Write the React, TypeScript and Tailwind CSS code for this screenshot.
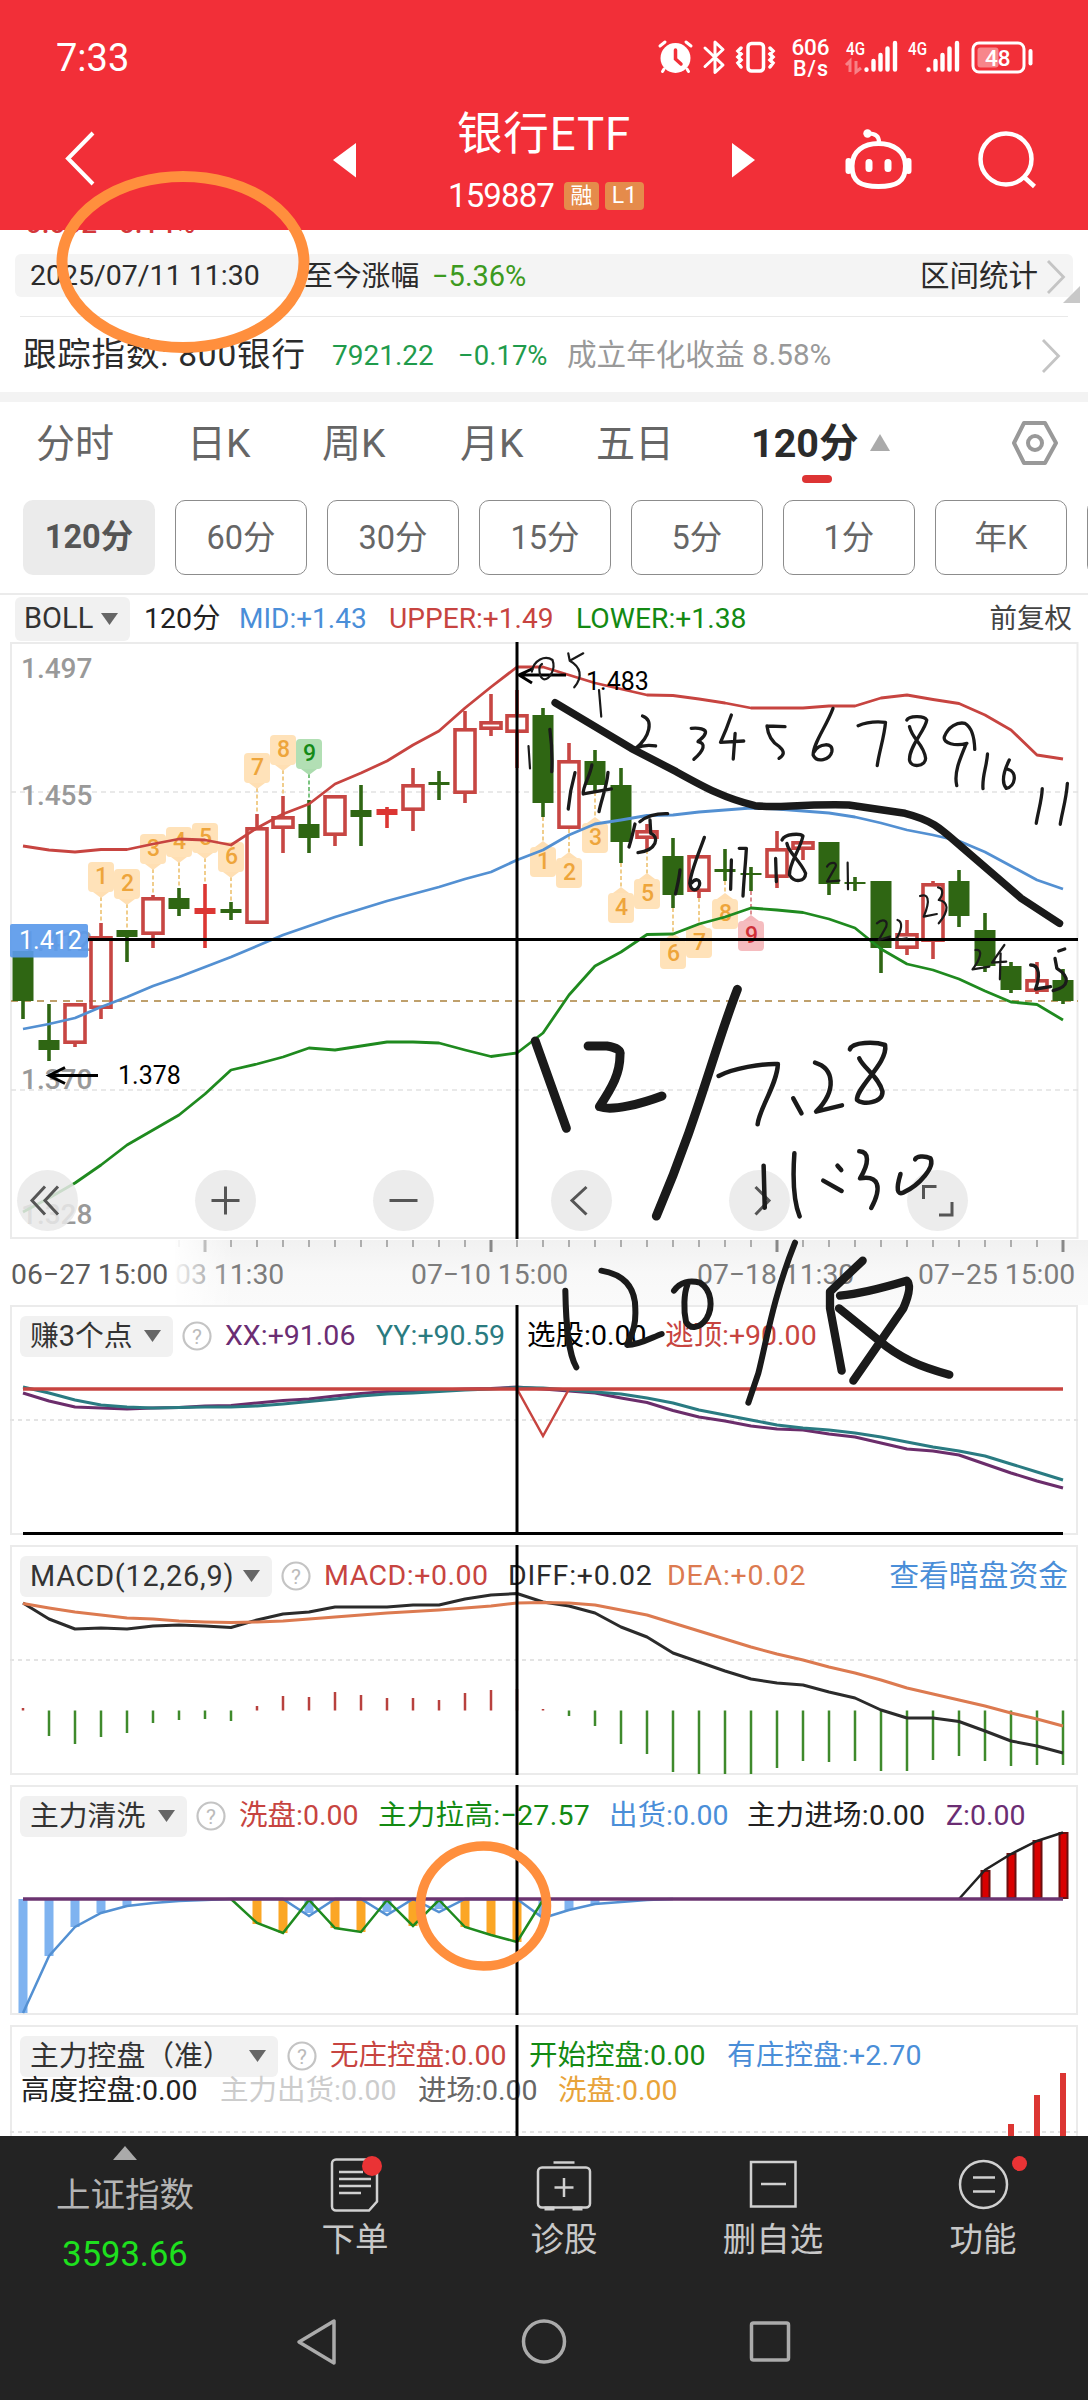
import type { ReactNode } from 'react';
import clsx from 'clsx';

type Candle = { kind: 'up' | 'down' | 'flat'; top: number; bottom: number; high: number; low: number };

const STEP = 26;
const x = (i: number) => 23 + STEP * i;
const toPoints = (ys: number[]) => ys.map((y, i) => `${x(i)},${y}`).join(' ');

const c = (kind: Candle['kind'], top: number, bottom: number, high: number, low: number): Candle => ({
  kind, top, bottom, high, low,
});

const CANDLES: Candle[] = [
  c('down', 951, 1001, 951, 1019), c('down', 1040, 1050, 1004, 1061), c('up', 1003, 1044, 1003, 1047),
  c('up', 936, 1009, 923, 1019), c('down', 930, 937, 930, 962), c('up', 897, 935, 895, 948),
  c('down', 898, 909, 888, 916), c('flat', 908, 914, 884, 948), c('down', 909, 913, 902, 920),
  c('up', 827, 924, 814, 924), c('up', 816, 829, 796, 853), c('down', 824, 838, 800, 853),
  c('up', 795, 836, 795, 846), c('down', 810, 817, 785, 846), c('flat', 809, 815, 807, 828),
  c('up', 784, 811, 768, 831), c('down', 782, 785, 771, 800), c('up', 728, 794, 711, 803),
  c('up', 721, 730, 694, 736), c('up', 714, 733, 690, 768), c('down', 715, 803, 708, 817),
  c('up', 760, 829, 743, 829), c('down', 761, 785, 750, 792), c('down', 785, 842, 768, 863),
  c('up', 830, 839, 824, 850), c('down', 856, 895, 838, 908), c('up', 855, 892, 855, 898),
  c('down', 869, 872, 849, 881), c('down', 873, 875, 867, 891), c('up', 848, 878, 831, 888),
  c('up', 841, 850, 841, 860), c('down', 842, 884, 842, 895), c('down', 882, 884, 877, 891),
  c('down', 881, 948, 881, 973), c('up', 933, 949, 920, 955), c('up', 883, 942, 881, 959),
  c('down', 881, 916, 870, 927), c('down', 930, 966, 913, 972), c('down', 966, 990, 962, 993),
  c('up', 979, 992, 962, 994), c('down', 980, 1001, 969, 1004),
];

const UPPER = [846, 850, 852, 849.5, 849.5, 844, 839, 840, 845, 828, 814, 804, 784, 773, 761, 745, 731, 708, 687, 667, 667, 675, 683, 689, 695, 695.5, 699, 703, 708, 708, 708, 706, 706, 698, 695, 699.5, 703.5, 715, 730, 755, 759];
const MID = [1029, 1024, 1018, 1007, 997, 986, 977, 967, 957, 946, 935, 926, 917, 909, 901, 894, 887, 879, 872, 860, 850, 835, 824, 820, 815.5, 815, 812, 810, 808, 809, 811, 813, 817, 823, 830, 835, 841, 852, 866, 880, 889];
const LOWER = [1212, 1198, 1183, 1165, 1145, 1130, 1115, 1094, 1070, 1064, 1057, 1048, 1050, 1046, 1042, 1042, 1043, 1050, 1056.5, 1053, 1033, 995, 966, 952, 934.5, 934, 924, 917, 908, 910, 912.5, 919, 928, 949, 964, 970, 979, 991, 1002, 1004.5, 1020];

const XX = [1393, 1401, 1407, 1408, 1409, 1408, 1407.5, 1406, 1405.5, 1403, 1400.5, 1399, 1396, 1393.5, 1391.5, 1390.5, 1390, 1389, 1388.5, 1387, 1389, 1391, 1393, 1398, 1402.5, 1410.5, 1417, 1421, 1426, 1429, 1430, 1434, 1437, 1443, 1449, 1451, 1455, 1464, 1473, 1481, 1488];
const YY = [1387, 1393, 1400, 1405, 1407, 1408, 1407.5, 1407, 1407, 1406, 1404, 1401.5, 1399, 1396, 1394, 1393, 1391.5, 1390, 1389, 1387.5, 1388, 1390, 1392, 1394, 1398, 1403, 1410, 1415, 1420, 1425, 1428, 1430, 1433, 1437, 1442, 1447, 1451, 1456, 1464, 1472, 1480];

const DIFF = [1603, 1619, 1629, 1628, 1629, 1626, 1625, 1626, 1627.5, 1620, 1614, 1612, 1607, 1607, 1607, 1605, 1605, 1599, 1595, 1593.5, 1602, 1606, 1613, 1627, 1637, 1653, 1662, 1671, 1679, 1683, 1685, 1692, 1698, 1710, 1718, 1718, 1721.5, 1731, 1741, 1746, 1753];
const DEA = [1603.5, 1608, 1612, 1615, 1618, 1619, 1621, 1622, 1622.5, 1622, 1621, 1619, 1617, 1615, 1613, 1611.5, 1610, 1608, 1606, 1603, 1602.5, 1603, 1605, 1610, 1615, 1623, 1631, 1639, 1647, 1654, 1660, 1667, 1673, 1680, 1688, 1694, 1700, 1706, 1713, 1719, 1726];
const MACD = [1708, 1736, 1744, 1737, 1733, 1723, 1720, 1719, 1721, 1706, 1696, 1697, 1692, 1695, 1698, 1698, 1700, 1693, 1690, 1689, 1709, 1716, 1726, 1744, 1754, 1772, 1774, 1774, 1774, 1768, 1761, 1762, 1761, 1771, 1771, 1760, 1756, 1761, 1766, 1765, 1765];

const SHIP = [2013, 1956, 1927, 1913, 1906, 1903, 1901, 1900, 1899, 1899, 1899, 1916, 1899, 1899, 1915, 1899, 1912, 1899, 1899, 1899, 1918, 1910, 1904, 1902, 1900, 1899];

// nine-turn counters: index, tag top, digit
const TAGS_ABOVE = [[3, 862, 1], [4, 869, 2], [5, 834, 3], [6, 827, 4], [7, 823, 5], [8, 842, 6], [9, 753, 7], [10, 735, 8], [11, 739, 9]];
const TAGS_BELOW = [[20, 847, 1], [21, 858, 2], [22, 823, 3], [23, 893, 4], [24, 879, 5], [25, 939, 6], [26, 928, 7], [27, 899, 8], [28, 921, 9]];

const TABS = [
  ['分时', 'w-[151px]'], ['日K', 'w-[135px]'], ['周K', 'w-[138px]'], ['月K', 'w-[136px]'], ['五日', 'w-[155px]'],
];

function Caret({ className }: { className?: string }) {
  return (
    <svg className={clsx('h-3 w-[17px] shrink-0', className)} viewBox="0 0 17 12">
      <path d="M0 0h17L8.5 12z" fill="#666" />
    </svg>
  );
}

function CandleShape({ d, i }: { d: Candle; i: number }) {
  const cx = x(i);
  const color = d.kind === 'down' ? '#2f6613' : d.kind === 'flat' ? '#dc3633' : '#c74643';
  return (
    <g stroke={color} strokeWidth="3.6" fill="none">
      {d.high < d.top && <path d={`M${cx} ${d.high}V${d.top}`} />}
      {d.low > d.bottom && <path d={`M${cx} ${d.bottom}V${d.low}`} />}
      {d.kind === 'up' ? (
        <rect x={cx - 10} y={d.top + 1.8} width="20" height={d.bottom - d.top - 3.6} />
      ) : (
        <rect x={cx - 10.5} y={d.top} width="21" height={d.bottom - d.top} fill={color} stroke="none" />
      )}
    </g>
  );
}

function Tag({ i, top, n, below }: { i: number; top: number; n: number; below?: boolean }) {
  const cx = x(i);
  const last = n === 9;
  const bg = !last ? '#ffdfb3' : below ? '#f4b6ba' : '#abdcae';
  const fg = !last ? '#eea53b' : below ? '#cf3038' : '#148a16';
  const line = !last ? '#f0cd8c' : below ? '#dc8f93' : '#7cc481';
  return (
    <g>
      {below ? (
        <>
          <path d={`M${cx} ${CANDLES[i].low}V${top - 5}`} stroke={line} strokeWidth="2" strokeDasharray="4 2.5" />
          <path d={`M${cx - 8} ${top}L${cx} ${top - 6}L${cx + 8} ${top}z`} fill={bg} />
        </>
      ) : (
        <>
          <path d={`M${cx} ${top + 35}V${CANDLES[i].high}`} stroke={line} strokeWidth="2" strokeDasharray="4 2.5" />
          <path d={`M${cx - 8} ${top + 30}L${cx} ${top + 36}L${cx + 8} ${top + 30}z`} fill={bg} />
        </>
      )}
      <rect x={cx - 13} y={top} width="26" height="30" rx="4" fill={bg} opacity="0.92" />
      <text x={cx + 0.5} y={top + 21.5} fontSize="23" fontWeight="500" textAnchor="middle" fill={fg}>{n}</text>
    </g>
  );
}

function StatusIcons() {
  const bars = (ox: number) => (
    <g stroke="#fff" strokeWidth="4.4" strokeLinecap="round">
      <path d={`M${ox} 69.5v.3M${ox + 7} 61v8.5M${ox + 14} 55v14.5M${ox + 21} 48.500v21M${ox + 28.5} 43v26.500`} />
    </g>
  );
  return (
    <svg className="h-[52px] w-[390px]" viewBox="650 32 390 52" fill="none">
      <g stroke="#fff" strokeLinecap="round">
        <circle cx="675.5" cy="58" r="15" fill="#fff" stroke="none" />
        <path d="M660 46l5-4M691 46l-5-4M664 69l-1.500 2.500M687 69l1.500 2.500" strokeWidth="3" />
        <path d="M675.500 50v9l5.500 5" stroke="#f22f38" strokeWidth="3.5" />
        <path d="M705 48l18 17-8 7.500V42l8 7.500-18 17" strokeWidth="3" strokeLinejoin="round" />
        <rect x="748" y="43.5" width="15.5" height="27.5" rx="3.5" strokeWidth="3.5" />
        <path d="M741 48l-3 3 3 3-3 3 3 3-3 3 3 4M770 48l3 3-3 3 3 3-3 3 3 3-3 4" strokeWidth="3.5" />
      </g>
      <g fill="#fff" fontWeight="500">
        <text x="791.5" y="54.5" fontSize="22.5" textLength="38">606</text>
        <text x="793" y="75.5" fontSize="21.5" textLength="35">B/s</text>
        <text x="846" y="55" fontSize="19" textLength="19" lengthAdjust="spacingAndGlyphs">4G</text>
        <text x="908" y="55" fontSize="19" textLength="19" lengthAdjust="spacingAndGlyphs">4G</text>
      </g>
      <path d="M846 65l4-4v11M856 61v11l5-4" stroke="#fff" strokeWidth="3" opacity=".4" />
      {bars(866.5)}
      {bars(928.5)}
      <rect x="973" y="43" width="51" height="29" rx="6" stroke="#fff" strokeWidth="3" />
      <rect x="977.5" y="47.5" width="21" height="20" rx="3" fill="#fff" opacity=".42" />
      <path d="M1030.500 51v12.500" stroke="#fff" strokeWidth="4" strokeLinecap="round" />
      <text x="985" y="65.5" fontSize="22.5" fontWeight="500" fill="#fff">48</text>
    </svg>
  );
}

function Header() {
  return (
    <header className="flex h-[230px] shrink-0 flex-col bg-[#f22f38] text-white">
      <div className="mt-8 flex h-[52px] items-center justify-between pr-12 pl-14">
        <span className="text-[38px] leading-[54px]">7:33</span>
        <StatusIcons />
      </div>
      <div className="-mt-2 flex h-[154px]">
        <svg className="ml-[60px] h-full w-10 shrink-0" viewBox="60 76 40 154" fill="none">
          <path d="M93 133L68 158.500L93 184" stroke="#fff" strokeWidth="4" />
        </svg>
        <svg className="ml-[233px] h-full w-[23px] shrink-0" viewBox="333 76 23 154">
          <path d="M356 143v34.500L333 160z" fill="#fff" />
        </svg>
        <div className="flex w-[376px] flex-col items-center">
          <h1 className="mt-[31px] text-[45.5px] leading-[56px] tracking-[0.9px]">银行ETF</h1>
          <div className="mt-[15px] flex h-9 items-center pl-1">
            <span className="mr-2.5 text-[33px] leading-9 tracking-[-0.9px]">159887</span>
            <span className="mr-1.5 h-7 w-[35px] rounded bg-[#e58b4b] text-center text-[22px] leading-7">融</span>
            <span className="h-7 w-[39px] rounded bg-[#e58b4b] text-center text-[23px] leading-7">L1</span>
          </div>
        </div>
        <svg className="h-full w-[23px] shrink-0" viewBox="732 76 23 154">
          <path d="M732 143v34.500L755 160z" fill="#fff" />
        </svg>
        <svg className="ml-[87px] h-full w-[74px] shrink-0" viewBox="842 76 74 154" fill="none" stroke="#fff" strokeWidth="5">
          <path d="M852 166C852 151 864 143.500 878.500 143.500S905.500 151 905.500 166C905.500 182 896 186.500 878.500 186.500S852 182 852 166z" />
          <path d="M879 142C879 136 875 133.500 869 133.500" strokeWidth="4" />
          <circle cx="867.5" cy="133.5" r="4.2" fill="#fff" stroke="none" />
          <path d="M848.500 161v10M908.500 161v10" strokeWidth="6" strokeLinecap="round" />
          <path d="M869 162.500v6M888 162.500v6" strokeWidth="7" strokeLinecap="round" />
        </svg>
        <svg className="ml-[58px] h-full w-[70px] shrink-0" viewBox="974 76 70 154" fill="none" stroke="#fff" strokeWidth="4.5">
          <circle cx="1006" cy="159" r="25.5" />
          <path d="M1024 177l10.500 9.500" />
        </svg>
      </div>
    </header>
  );
}

function Chevron({ className }: { className?: string }) {
  return (
    <svg className={clsx('h-9 w-5 shrink-0', className)} viewBox="0 0 20 36" fill="none">
      <path d="M2 2l15.500 16L2 34" stroke="#c4c4c4" strokeWidth="2.8" />
    </svg>
  );
}

function Summary() {
  return (
    <div className="shrink-0 text-[28.5px]">
      <div className="h-6 overflow-hidden pl-2.5">
        <p className="-mt-[26px] leading-10 whitespace-pre text-[28px] font-medium text-[#d4373b]">−0.002<span className="ml-1.5">−0.14%</span></p>
      </div>
      <div className="relative mx-[15px] flex h-[43px] items-center rounded-md bg-[#f4f4f4] pt-[2px] pl-[15px] text-[#2b2b2b]">
        <span className="w-[274px]">2025/07/11 11:30</span>
        <span className="w-[128px] text-[28.8px]">至今涨幅</span>
        <span className="text-[29px] text-[#3c9a20]">−5.36%</span>
        <span className="ml-auto text-[29.5px]">区间统计</span>
        <Chevron className="mr-[7px] ml-2" />
        <span className="absolute right-[-7px] bottom-[-6px] border-b-[17px] border-l-[17px] border-b-[#c8c8c8] border-l-transparent" />
      </div>
      <div className="mx-5 mt-[19px] flex h-[76px] items-center border-t border-[#e9e9e9] pt-[2px]">
        <span className="ml-[3px] w-[309px] text-[33.5px] tracking-[0.8px] whitespace-nowrap text-[#2b2b2b]">跟踪指数: 800银行</span>
        <span className="w-[126px] text-[28px] text-[#1f9b4c]">7921.22</span>
        <span className="w-[109px] text-[27.5px] text-[#1f9b4c]">−0.17%</span>
        <span className="text-[29.6px] text-[#999]">成立年化收益 8.58%</span>
        <Chevron className="mr-[7px] ml-auto" />
      </div>
      <div className="h-[10px] bg-[#f3f3f3]" />
    </div>
  );
}

function PeriodTabs() {
  return (
    <div className="shrink-0 overflow-hidden border-b-2 border-[#ebebeb]">
      <nav className="flex h-[98px] pt-[17px] pl-[36px] text-[39px] leading-[50px] text-[#666]">
        {TABS.map(([label, width]) => (
          <span key={label} className={clsx('shrink-0', width)}>{label}</span>
        ))}
        <div className="flex w-[165px] shrink-0 flex-col items-center text-[#2b2b2b]">
          <span className="self-start text-[39.5px] font-bold whitespace-nowrap">120分</span>
          <span className="mt-[6px] mr-[33px] h-2 w-[30px] rounded-full bg-[#dd3434]" />
        </div>
        <svg className="-ml-[46px] mt-[15px] h-[17px] w-5 shrink-0" viewBox="0 0 20 17"><path d="M10 0l10 17H0z" fill="#aaa" /></svg>
        <svg className="ml-[120px] h-12 w-[50px] shrink-0" viewBox="0 0 50 48" fill="none" stroke="#999" strokeWidth="4">
          <path d="M14 4h21l11 20-11 20H14L4 24z" strokeLinejoin="round" />
          <circle cx="25" cy="24" r="7" />
        </svg>
      </nav>
      <div className="flex h-[93px] gap-5 pl-[23px] text-[32.5px] leading-[75px] text-[#666]">
        {['120分', '60分', '30分', '15分', '5分', '1分', '年K', ''].map((label, i) => (
          <span
            key={i}
            className={clsx(
              'h-[75px] w-[132px] shrink-0 rounded-[10px] text-center',
              i === 0 ? 'bg-[#ebebeb] font-bold text-[#555]' : 'border-[1.5px] border-[#8c8c8c]',
            )}
          >
            {label}
          </span>
        ))}
      </div>
    </div>
  );
}

function BollLegend() {
  return (
    <div className="flex h-[45px] shrink-0 items-center pt-[3px] pl-[15px] text-[28.5px]">
      <div className="flex h-11 w-[115px] items-center rounded-md bg-[#f1f1f1] pl-[9px] text-[29px] text-[#333]">
        BOLL
        <Caret className="ml-2" />
      </div>
      <span className="ml-[14px] w-[95px] text-[28.5px] text-[#222]">120分</span>
      <span className="w-[150px] text-[28px] text-[#4a8ed8]">MID:+1.43</span>
      <span className="w-[187px] text-[28.1px] text-[#c74440]">UPPER:+1.49</span>
      <span className="text-[28.3px] text-[#138a13]">LOWER:+1.38</span>
      <span className="mr-[16px] ml-auto text-[27.5px] text-[#444]">前复权</span>
    </div>
  );
}

function PriceChart() {
  return (
    <div className="relative h-[600px] shrink-0">
      <svg className="block h-[600px] w-[1088px]" viewBox="0 640 1088 600" fill="none">
        <rect x="11" y="643" width="1066.5" height="595" stroke="#ebebeb" strokeWidth="2" />
        <path d="M11 792h1067M11 1090h1067" stroke="#e2e2e2" strokeWidth="1.5" strokeDasharray="5 4" />
        <g fontSize="28" fontWeight="500" fill="#999">
          <text x="21" y="678">1.497</text>
          <text x="21" y="805">1.455</text>
          <text x="21" y="951">1.412</text>
          <text x="21" y="1089">1.370</text>
          <text x="21" y="1224">1.328</text>
        </g>
        <path d="M11 1001h1067" stroke="#bfa06c" strokeWidth="2" strokeDasharray="7 6" />
        {CANDLES.map((d, i) => <CandleShape key={i} d={d} i={i} />)}
        {TAGS_ABOVE.map(([i, top, n]) => <Tag key={i} i={i} top={top} n={n} />)}
        {TAGS_BELOW.map(([i, top, n]) => <Tag key={i} i={i} top={top} n={n} below />)}
        <g strokeWidth="2.8" strokeLinejoin="round">
          <polyline points={toPoints(UPPER)} stroke="#c74440" />
          <polyline points={toPoints(MID)} stroke="#5390d2" />
          <polyline points={toPoints(LOWER)} stroke="#1f8a1f" />
        </g>
        <rect x="10" y="924" width="78" height="33.5" rx="2" fill="#5b9aea" opacity=".92" />
        <path d="M88 939.500H1078M517 642V1239" stroke="#000" strokeWidth="3" />
        <path d="M519 675h47M533 668.500l-14 6.500 13 8" stroke="#000" strokeWidth="3" />
        <path d="M49 1075.500h49M65 1067.500l-16 8 16 8" stroke="#000" strokeWidth="3" />
        <text x="19" y="948.5" fontSize="25" fill="#fff">1.412</text>
        <g fontSize="25" fill="#000">
          <text x="586" y="689.5">1.483</text>
          <text x="118" y="1083.5">1.378</text>
        </g>
      </svg>
      <div className="absolute bottom-[9px] left-[17px] flex gap-[117px]">
        {[
          'M28 16.500L15 30.500l13 14M41 16.500L28 30.500l13 14',
          'M16.500 30.500h28M30.500 16.500v28',
          'M16.500 30.500h28',
          'M35.500 17L21 30.500l14.500 14',
          'M26.500 17L40 30.500l-13.500 14',
          'M16.500 29V16.500h13M45 32v13H32',
        ].map((d) => (
          <svg key={d} className="h-[61px] w-[61px] rounded-full bg-[#e9e9e9]/85" viewBox="0 0 61 61" fill="none">
            <path d={d} stroke="#555" strokeWidth="3" />
          </svg>
        ))}
      </div>
    </div>
  );
}

function TimeAxis() {
  const big = [7, 18, 29, 40];
  return (
    <svg className="block h-[65px] w-[1088px] shrink-0" viewBox="0 1240 1088 65">
      <defs>
        <linearGradient id="axis-bg" x1="0" x2="0" y1="0" y2="1">
          <stop offset="0" stopColor="#f1f1f1" />
          <stop offset=".5" stopColor="#f8f8f8" />
          <stop offset="1" stopColor="#fafafa" />
        </linearGradient>
        <linearGradient id="axis-fade" x1="0" x2="1" y1="0" y2="0">
          <stop offset="0" stopColor="#fff" stopOpacity=".95" />
          <stop offset="1" stopColor="#fff" stopOpacity="0" />
        </linearGradient>
      </defs>
      <rect x="0" y="1240" width="1088" height="65" fill="url(#axis-bg)" />
      {CANDLES.map((_, i) => (
        <path key={i} d={`M${x(i)} 1239v${big.includes(i) ? 13 : 8}`} stroke="#888" strokeWidth={big.includes(i) ? 3 : 1.3} />
      ))}
      <g fontSize="28.3" fill="#7c7c7c">
        <text x="127" y="1284">07−03 11:30</text>
        <rect x="174" y="1239" width="60" height="66" fill="url(#axis-fade)" />
        <rect x="0" y="1239" width="174.5" height="66" fill="#fff" />
        <text x="411" y="1284">07−10 15:00</text>
        <text x="697" y="1284">07−18 11:30</text>
        <text x="918" y="1284">07−25 15:00</text>
        <text x="11" y="1284" fill="#5c5c5c">06−27 15:00</text>
      </g>
    </svg>
  );
}

type PanelProps = {
  name: string;
  chip: string;
  labels: string[][];
  viewBox: string;
  link?: string;
  rows?: string[][];
  children: ReactNode;
};

function IndicatorPanel({ name, chip, labels, viewBox, link, rows, children }: PanelProps) {
  return (
    <section className="relative mx-2.5 h-[230px] shrink-0 overflow-hidden ring-2 ring-[#ebebeb] ring-inset">
      <div className="flex items-center pt-2.5 pl-2.5 text-[28.5px] leading-[42px] whitespace-nowrap">
        <div className={clsx('flex h-[41px] shrink-0 items-center justify-between rounded-md bg-[#f1f1f1] pr-3 pl-2.5 text-[28.8px] text-[#333]', chip)}>
          {name}
          <Caret />
        </div>
        <svg className="mr-[13px] ml-[9px] h-[30px] w-[30px] shrink-0" viewBox="0 0 30 30">
          <circle cx="15" cy="15" r="13.5" fill="none" stroke="#c4c4c4" strokeWidth="2.2" />
          <text x="15" y="22.5" fontSize="21" textAnchor="middle" fill="#bbb">?</text>
        </svg>
        {labels.map(([text, cls]) => (
          <span key={text} className={clsx('shrink-0', cls)}>{text}</span>
        ))}
        {link && <span className="mr-[10px] ml-auto text-[29.8px] text-[#4a8ed8]">{link}</span>}
      </div>
      {rows && (
        <div className="-mt-[6px] flex pl-[11px] text-[28.5px] leading-[40px] whitespace-nowrap">
          {rows.map(([text, cls]) => (
            <span key={text} className={clsx('shrink-0', cls)}>{text}</span>
          ))}
        </div>
      )}
      <svg className="pointer-events-none absolute inset-0 h-full w-full" viewBox={viewBox} fill="none">
        {children}
      </svg>
    </section>
  );
}

function Indicators() {
  return (
    <div className="flex h-[831px] shrink-0 flex-col gap-2.5 overflow-hidden">
      <IndicatorPanel
        name="赚3个点"
        chip="w-[153px]"
        viewBox="10 1305 1068 230"
        labels={[
          ['XX:+91.06', 'w-[151px] text-[#6b2d73]'],
          ['YY:+90.59', 'w-[151px] text-[#2a7b80]'],
          ['选股:0.00', 'w-[138px] text-black'],
          ['逃顶:+90.00', 'text-[#c74440]'],
        ]}
      >
        <path d="M10 1420h1068" stroke="#e4e4e4" strokeWidth="2" strokeDasharray="4 4" />
        <g strokeWidth="3" strokeLinejoin="round">
          <polyline points={toPoints(XX)} stroke="#6b2d6b" />
          <polyline points={toPoints(YY)} stroke="#2a7b82" />
        </g>
        <path d="M23 1389H1063" stroke="#c74440" strokeWidth="3.4" />
        <path d="M517 1389L543 1436L569 1389" stroke="#c74440" strokeWidth="2.5" />
        <path d="M23 1533.500H1063" stroke="#000" strokeWidth="3" />
        <path d="M517 1305V1535" stroke="#000" strokeWidth="3" />
      </IndicatorPanel>

      <IndicatorPanel
        name="MACD(12,26,9)"
        chip="w-[252px] tracking-[0.8px]"
        link="查看暗盘资金"
        viewBox="10 1545 1068 230"
        labels={[
          ['MACD:+0.00', 'w-[184px] tracking-[0.5px] text-[#c74440]'],
          ['DIFF:+0.02', 'w-[159px] tracking-[0.8px] text-[#2b2b2b]'],
          ['DEA:+0.02', 'tracking-[0.8px] text-[#dc7a50]'],
        ]}
      >
        <path d="M10 1660h1068" stroke="#e4e4e4" strokeWidth="2" strokeDasharray="4 4" />
        {MACD.map((y, i) => (
          <path key={i} d={`M${x(i)} 1710.500V${y}`} stroke={y < 1710 ? '#b8413e' : '#3f8a2c'} strokeWidth="2.5" />
        ))}
        <g strokeWidth="3" strokeLinejoin="round">
          <polyline points={toPoints(DIFF)} stroke="#2b2b2b" />
          <polyline points={toPoints(DEA)} stroke="#dc7a50" />
        </g>
        <path d="M517 1545V1775" stroke="#000" strokeWidth="3" />
      </IndicatorPanel>

      <IndicatorPanel
        name="主力清洗"
        chip="w-[167px]"
        viewBox="10 1785 1068 230"
        labels={[
          ['洗盘:0.00', 'w-[139px] text-[#c74440]'],
          ['主力拉高:−27.57', 'w-[231px] tracking-[0.3px] text-[#138a13]'],
          ['出货:0.00', 'w-[138px] text-[#4a8ed8]'],
          ['主力进场:0.00', 'w-[199px] tracking-[0.2px] text-[#222]'],
          ['Z:0.00', 'text-[#6b2d73]'],
        ]}
      >
        {[[0, 2013], [1, 1956], [2, 1927], [3, 1913], [4, 1906], [11, 1913], [14, 1912], [16, 1909], [20, 1916], [21, 1910], [22, 1904]].map(([i, y]) => (
          <rect key={i} x={x(i) - 4.5} y="1899" width="9" height={y - 1899} fill="#7fb3f0" />
        ))}
        {[[9, 1924], [10, 1933], [12, 1928], [13, 1932], [15, 1926], [17, 1927], [18, 1935], [19, 1942]].map(([i, y]) => (
          <rect key={i} x={x(i) - 4.5} y="1899" width="9" height={y - 1899} fill="#fba625" />
        ))}
        <polyline points={toPoints(SHIP)} stroke="#5390d2" strokeWidth="2.5" />
        <path
          d="M231 1899L257 1923L283 1933L309 1900L335 1928L361 1932L387 1900L413 1926L439 1900L465 1927L491 1935L517 1942L543 1900"
          stroke="#1f8a1f"
          strokeWidth="2.5"
        />
        {[[37, 1871], [38, 1854], [39, 1841], [40, 1833]].map(([i, y]) => (
          <rect key={i} x={x(i) - 3.5} y={y} width="8" height={1898 - y} fill="#d90000" stroke="#6d0f0f" strokeWidth="2" />
        ))}
        <path d="M959 1899L985 1870L1011 1854L1037 1841L1063 1832.500" stroke="#222" strokeWidth="2.5" />
        <path d="M23 1899H1063" stroke="#6b3470" strokeWidth="3.6" />
        <path d="M517 1785V2015" stroke="#000" strokeWidth="3" />
      </IndicatorPanel>

      <IndicatorPanel
        name="主力控盘（准）"
        chip="w-[258px]"
        viewBox="10 2025 1068 230"
        labels={[
          ['无庄控盘:0.00', 'w-[199px] text-[#c74440]'],
          ['开始控盘:0.00', 'w-[198px] text-[#138a13]'],
          ['有庄控盘:+2.70', 'tracking-[0.2px] text-[#4a8ed8]'],
        ]}
        rows={[
          ['高度控盘:0.00', 'w-[199px] text-[#222]'],
          ['主力出货:0.00', 'w-[198px] text-[#ccc]'],
          ['进场:0.00', 'w-[140px] text-[#666]'],
          ['洗盘:0.00', 'text-[#e8a33a]'],
        ]}
      >
        <path d="M10 2132h1068" stroke="#e4e4e4" strokeWidth="2" strokeDasharray="4 4" />
        <path d="M1011 2124v20M1037 2095v50M1063 2073v70" stroke="#dc3633" strokeWidth="6" />
        <path d="M517 2025V2255" stroke="#000" strokeWidth="3" />
      </IndicatorPanel>
    </div>
  );
}

function BottomBar() {
  return (
    <footer className="h-[264px] shrink-0 bg-[#232323] text-[#c8c8c8]">
      <div className="flex h-[140px] text-center text-[33.5px] leading-[50px]">
        <div className="flex w-[250px] flex-col items-center leading-[44px] text-[#b4b4b4]">
          <svg className="mt-[10px] h-3.5 w-6 shrink-0" viewBox="0 0 24 14"><path d="M12 0l12 14H0z" fill="#aaa" /></svg>
          <span className="mt-[13px] text-[34.5px] leading-[44px]">上证指数</span>
          <span className="mt-[15px] text-[34.5px] leading-[44px] text-[#1ee01e]">3593.66</span>
        </div>
        <div className="flex w-[210px] flex-col items-center">
          <svg className="mt-[16px] h-[64px] w-[60px]" viewBox="326 2152 60 64" fill="none" stroke="#d0d0d0" strokeWidth="2.5">
            <path d="M337 2159.500h37a4 4 0 0 1 4 4v38l-8 9H337a4 4 0 0 1-4-4v-43a4 4 0 0 1 4-4z" />
            <path d="M340 2172h24M340 2179h32M340 2186h32M340 2193h22" />
            <circle cx="373" cy="2166" r="10" fill="#ea3335" stroke="none" />
          </svg>
          <span className="-mt-[1px]">下单</span>
        </div>
        <div className="flex w-[208px] flex-col items-center">
          <svg className="mt-[16px] h-[64px] w-[60px]" viewBox="534.5 2152 60 64" fill="none" stroke="#d0d0d0" strokeWidth="2.5">
            <rect x="538.5" y="2167.5" width="52" height="40" rx="4" />
            <path d="M554 2162.500h21M555 2187.500h19M564.500 2178v19" />
            <path d="M545 2208.500h10M573 2208.500h10" strokeWidth="4" />
          </svg>
          <span className="-mt-[1px]">诊股</span>
        </div>
        <div className="flex w-[210px] flex-col items-center">
          <svg className="mt-[16px] h-[64px] w-[60px]" viewBox="743 2152 60 64" fill="none" stroke="#d0d0d0" strokeWidth="2.5">
            <rect x="751" y="2162" width="44.5" height="44.5" />
            <path d="M761 2184h25" />
          </svg>
          <span className="-mt-[1px]">删自选</span>
        </div>
        <div className="flex w-[210px] flex-col items-center">
          <svg className="mt-[16px] ml-[2px] h-[64px] w-[90px]" viewBox="938 2152 90 64" fill="none" stroke="#d0d0d0" strokeWidth="2.5">
            <circle cx="982.5" cy="2184.5" r="23.5" />
            <path d="M972 2177.500h22M972 2191.500h22" />
            <circle cx="1018.5" cy="2163.5" r="7.5" fill="#ea3335" stroke="none" />
          </svg>
          <span className="-mt-[1px]">功能</span>
        </div>
      </div>
      <div className="flex h-[124px] justify-center gap-[174px] pt-[41px]">
        <svg className="h-[50px] w-[52px]" viewBox="0 0 52 50" fill="none" stroke="#ababab" strokeWidth="3.5" strokeLinejoin="round">
          <path d="M42 4v42L7 25z" />
        </svg>
        <svg className="h-[50px] w-[52px]" viewBox="0 0 52 50" fill="none" stroke="#ababab" strokeWidth="3.5">
          <circle cx="26" cy="24.5" r="20.5" />
        </svg>
        <svg className="h-[50px] w-[52px]" viewBox="0 0 52 50" fill="none" stroke="#ababab" strokeWidth="3.5">
          <rect x="7.5" y="6" width="37" height="37" rx="2" />
        </svg>
      </div>
    </footer>
  );
}

const THIN = [
  'M85 95C90 60 120 45 140 60C150 90 130 118 118 118C105 115 100 80 112 72',
  'M182 40L186 62C215 80 222 110 198 142M186 62L222 40',
  'M264 150L270 230',
  'M872 680C880 665 900 665 895 680L872 725L905 722M927 668L928 748',
  'M1005 850C1020 835 1035 840 1030 860L1010 900L1040 890M1060 840C1075 845 1072 870 1055 900L1085 895',
  'M1120 768C1140 760 1150 775 1130 830L1165 822M1168 742C1185 745 1180 770 1170 780C1195 785 1200 810 1170 850',
  'M76 318L80 385',
  'M1268 930C1290 925 1280 960 1260 988L1305 980M1345 915L1312 968L1350 965M1335 940L1333 1018',
];
const PEN = [
  'M380 228C410 240 400 290 362 325C380 315 400 315 415 318',
  'M510 265C530 262 550 268 548 278C545 295 530 300 528 305C550 310 545 330 517 358',
  'M617 225C605 265 595 290 588 307L650 303M627 280L622 357',
  'M712 258L760 260M712 258C715 290 730 310 745 320C760 335 758 345 744 355',
  'M888 205C870 260 835 310 835 345C845 370 880 360 885 335C890 305 850 310 838 335',
  'M955 257C980 245 1010 245 1028 247C1025 290 1010 340 1006 377',
  'M1085 240C1090 228 1130 225 1138 240C1135 270 1090 320 1092 360C1095 385 1135 380 1135 355C1130 310 1100 300 1092 260',
  'M1245 310C1215 320 1180 310 1185 290C1195 260 1220 245 1240 250C1258 262 1265 290 1266 328M1243 312C1225 360 1210 400 1218 437',
  'M1300 342C1298 380 1285 410 1288 446M1358 360C1345 390 1335 425 1350 445C1375 440 1380 395 1355 388',
  'M1446 446C1445 480 1435 515 1430 550M1513 430C1510 480 1498 520 1494 553',
  'M133 268C138 310 140 350 138 395',
  'M200 398C192 430 185 470 182 507M245 375C240 410 220 440 222 462L297 447M288 397C285 440 270 480 264 515',
  'M360 552C355 575 350 600 344 621M373 545C395 525 420 520 447 521M400 540L402 580C425 590 420 630 368 638',
  'M480 690C478 715 472 740 468 762M545 592C530 640 510 690 506 730C510 755 525 755 532 735C535 715 520 715 510 730',
  'M617 660L615 748M638 625L657 625C655 670 650 720 648 768',
  'M735 655L737 725M752 600C760 580 800 580 808 588C800 630 770 670 772 705C785 730 815 725 815 700C800 660 770 640 765 610',
  'M1415 975C1440 975 1440 1010 1428 1047L1468 1040M1490 933L1506 927M1480 955L1485 985C1520 1010 1520 1040 1475 1052',
];
const MARKER = [
  'M583 1308C620 1285 700 1270 741 1272C740 1330 690 1410 687 1453',
  'M782 1375L804 1420',
  'M840 1268C890 1285 900 1350 843 1415L912 1396',
  'M933 1228C940 1205 1000 1205 1027 1215C1035 1270 950 1340 952 1380C965 1395 1020 1390 1020 1355C1010 1310 970 1285 958 1255',
  'M703 1577L706 1703M785 1540C780 1620 785 1690 799 1729',
  'M900 1577L910 1590M862 1622L911 1653',
  'M958 1534C985 1535 985 1570 960 1615C1010 1605 1020 1640 990 1704',
  'M1068 1602C1055 1650 1060 1665 1075 1658C1120 1635 1160 1580 1148 1555C1130 1545 1110 1550 1107 1558',
];

function Strokes({ paths, width }: { paths: string[]; width: number }) {
  return (
    <g strokeWidth={width}>
      {paths.map((d) => <path key={d} d={d} vectorEffect="non-scaling-stroke" />)}
    </g>
  );
}

// Pen marks drawn over the whole screen.
function Annotations() {
  return (
    <svg className="pointer-events-none absolute inset-0 h-[2400px] w-[1088px]" viewBox="0 0 1088 2400" fill="none" strokeLinecap="round" strokeLinejoin="round">
      <ellipse cx="183" cy="262" rx="121" ry="85.5" stroke="#ff8f3d" strokeWidth="11" />
      <ellipse cx="483.5" cy="1906" rx="63" ry="60" stroke="#ff8f3d" strokeWidth="9.5" />
      <g transform="translate(500 640) scale(.375 .33333)" stroke="#1a1a1a">
        <Strokes paths={THIN} width={2.2} />
        <Strokes paths={PEN} width={3.3} />
        <Strokes paths={MARKER} width={4.5} />
        <Strokes paths={['M147 188L350 325L470 395C550 445 600 475 680 497C740 505 790 492 930 495L1080 520C1150 540 1170 560 1230 620L1390 775L1492 850']} width={7.5} />
        <Strokes paths={['M94 1203L177 1465', 'M235 1218L285 1218Q325 1225 320 1245C320 1300 300 1340 265 1400C300 1415 380 1390 432 1368', 'M633 1048C570 1230 530 1430 417 1728']} width={9} />
      </g>
      <g transform="translate(540 1230) scale(.33333)" stroke="#1a1a1a">
        <Strokes
          paths={[
            'M76 182C78 290 85 370 109 412',
            'M184 122C260 135 287 180 286 240C288 290 275 310 262 345C300 345 340 320 365 312',
            'M402 182C420 155 450 150 480 158C515 180 520 230 500 265C480 295 450 300 438 275C430 240 432 190 442 165',
            'M765 38C700 200 680 330 655 430L625 518',
          ]}
          width={6}
        />
        <Strokes
          paths={[
            'M968 92L870 185L870 235L905 422',
            'M900 197C970 190 1040 170 1100 152C1115 165 1105 200 1090 235L940 452',
            'M897 235L1015 330C1080 385 1140 410 1228 434',
          ]}
          width={8.3}
        />
      </g>
    </svg>
  );
}

export default function App() {
  return (
    <div className="relative flex h-[2400px] w-[1088px] flex-col overflow-hidden bg-white font-['Roboto','Noto_Sans_CJK_SC',sans-serif]">
      <Header />
      <Summary />
      <PeriodTabs />
      <BollLegend />
      <PriceChart />
      <TimeAxis />
      <Indicators />
      <BottomBar />
      <Annotations />
    </div>
  );
}
